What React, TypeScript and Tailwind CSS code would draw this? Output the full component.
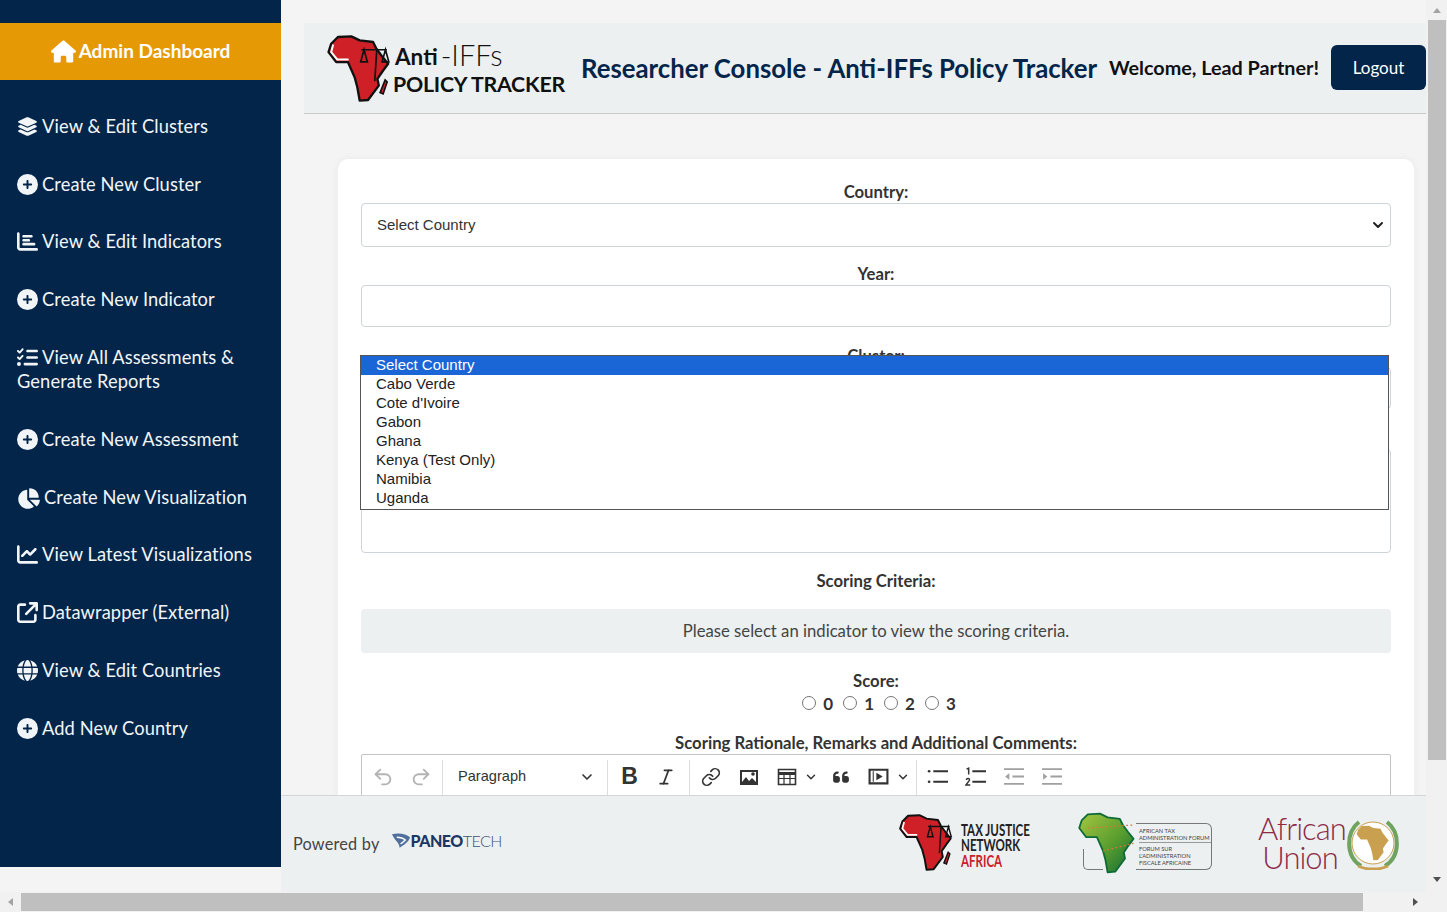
import { FaArrowUpRightFromSquare, FaChartBar, FaChartLine, FaChartPie, FaCirclePlus, FaGlobe, FaHouse, FaLayerGroup, FaListCheck, FaQuoteLeft } from 'react-icons/fa6';
import { ChevronDown, Italic, Link, Redo2, Undo2 } from 'lucide-react';
import type { ReactNode } from 'react';

const AFRICA =
  'M100 50 L140 48 L165 60 L205 65 L215 85 L232 108 L250 130 L235 150 L218 175 L222 195 L190 238 L165 240 L158 200 L150 170 L130 125 L95 125 L72 95 L80 70 Z';

function Africa({ className, justice }: { className: string; justice?: boolean }) {
  return (
    <svg viewBox="68 44 190 200" className={className}>
      <defs>
        <linearGradient id="ataf" x1="0" y1="0" x2="1" y2="1">
          <stop offset="0" stopColor="#a5c63f" />
          <stop offset="0.55" stopColor="#5a9e2f" />
          <stop offset="1" stopColor="#0d6b36" />
        </linearGradient>
      </defs>
      {justice ? (
        <>
          <path d={AFRICA} fill="#cf2027" stroke="#111" strokeWidth="7" strokeLinejoin="round" />
          <path d="M86 72 L80 95 L98 117 L132 117" fill="none" stroke="#fff" strokeWidth="6" />
          <path d="M241 178 L247 184 L235 220 L226 216 Z" fill="#cf2027" stroke="#111" strokeWidth="5" />
          <path d="M170 88 H246 M216 88 L210 182" stroke="#111" strokeWidth="5" fill="none" />
          <path d="M178 88 L168 124 H188 Z M242 88 L232 124 H252 Z" fill="none" stroke="#111" strokeWidth="5" />
        </>
      ) : (
        <>
          <path d={AFRICA} fill="url(#ataf)" stroke="#0d6b36" strokeWidth="6" strokeLinejoin="round" />
          <path d="M100 95 L250 85 M150 170 L250 145" fill="none" stroke="#d9763a" strokeWidth="4" strokeDasharray="6 8" />
        </>
      )}
    </svg>
  );
}

const menu: { icon: ReactNode; label: string; wide?: boolean }[] = [
  { icon: <FaLayerGroup />, label: 'View & Edit Clusters' },
  { icon: <FaCirclePlus />, label: 'Create New Cluster' },
  { icon: <FaChartBar />, label: 'View & Edit Indicators' },
  { icon: <FaCirclePlus />, label: 'Create New Indicator' },
  { icon: <FaListCheck />, label: 'View All Assessments & Generate Reports' },
  { icon: <FaCirclePlus />, label: 'Create New Assessment' },
  { icon: <FaChartPie />, label: 'Create New Visualization', wide: true },
  { icon: <FaChartLine />, label: 'View Latest Visualizations' },
  { icon: <FaArrowUpRightFromSquare />, label: 'Datawrapper (External)' },
  { icon: <FaGlobe />, label: 'View & Edit Countries' },
  { icon: <FaCirclePlus />, label: 'Add New Country' },
];

const countries = ['Cabo Verde', "Cote d'Ivoire", 'Gabon', 'Ghana', 'Kenya (Test Only)', 'Namibia', 'Uganda'];

function Sidebar() {
  return (
    <aside className="w-[281px] h-[867px] shrink-0 bg-[#04254a] text-[#f1f5f7] text-[18.3px] tracking-[0.1px] leading-[24px] pt-[23px]">
      <div className="h-[57px] pb-[1px] bg-[#e59a05] flex items-center justify-center gap-[3px] text-[19px] tracking-normal text-white font-bold">
        <FaHouse className="text-[25px]" />
        <span>Admin Dashboard</span>
      </div>
      <nav className="px-[17px]">
        {menu.map((m) => (
          <div key={m.label} className="mt-[33.8px]">
            <span className={`inline-block h-[20px] leading-none align-[-3px] mr-[4px] ${m.wide ? 'w-[23px] text-[23px]' : 'w-[21px] text-[21px]'} [&>svg]:block`}>
              {m.icon}
            </span>
            {m.label}
          </div>
        ))}
      </nav>
    </aside>
  );
}

function Header() {
  return (
    <header className="h-[91px] ml-[23px] bg-[#ecf0f1] border-b border-[#c9c9c9] flex items-center">
      <div className="w-[277px] pl-[23px] flex items-center shrink-0">
        <Africa justice className="w-[64px] h-[67px] mt-[1px] shrink-0" />
        <div className="ml-[2px] text-[#111] whitespace-nowrap">
          <div className="h-[31px] flex items-end pl-[2px]">
            <span className="font-bold text-[22.5px] leading-[28px]">Anti</span>
            <span className="ml-[3px] font-light text-[29px] leading-[33px]">-IFFs</span>
          </div>
          <div className="text-[21.3px] leading-[26px] font-bold tracking-[-0.2px]">POLICY TRACKER</div>
        </div>
      </div>
      <h1 className="text-[25.75px] font-bold text-[#04254a] whitespace-nowrap">Researcher Console - Anti-IFFs Policy Tracker</h1>
      <span className="ml-auto text-[19.8px] font-bold text-[#111] whitespace-nowrap">Welcome, Lead Partner!</span>
      <button className="ml-[12px] -mt-[1px] w-[95px] h-[45px] rounded-[6px] bg-[#04254a] text-white text-[17px]">Logout</button>
    </header>
  );
}

function Label({ children }: { children: ReactNode }) {
  return <div className="text-center text-[16.7px] leading-[20px] font-bold text-[#333]">{children}</div>;
}

function Toolbar() {
  return (
    <div className="mt-[1px] h-[46px] border border-[#c4c4c4] rounded-t-[2px] flex items-start pt-[5px] bg-white text-[#333] overflow-hidden">
      <div className="flex items-center gap-[16px] pl-[10px] pr-[10px] pb-[2px] h-[35px] border-r border-[#ddd]">
        <Undo2 className="w-[22px] h-[22px] text-[#b3b3b3]" />
        <Redo2 className="w-[22px] h-[22px] text-[#b3b3b3]" />
      </div>
      <div className="w-[165px] h-[35px] border-r border-[#ddd] pl-[15px] pr-[12px] pb-[2px] flex items-center justify-between text-[14.6px] font-['Liberation_Sans',sans-serif]">
        Paragraph
        <ChevronDown className="w-[16px] h-[16px]" strokeWidth={2.5} />
      </div>
      <div className="w-[82px] h-[35px] border-r border-[#ddd] pb-[2px] flex items-center justify-center gap-[18px]">
        <span className="text-[23px] leading-none font-black font-['Liberation_Sans',sans-serif]">B</span>
        <Italic className="w-[20px] h-[20px]" />
      </div>
      <div className="flex items-center pl-[11px] pb-[2px] h-[35px]">
        <Link className="w-[20px] h-[20px]" />
        <svg viewBox="0 0 20 20" className="w-[20px] h-[20px] ml-[18px]">
          <path d="M1 3h18v15H1z" fill="#333" />
          <path d="M3 5h14v10l-4-4-3 3-3-4-4 5z" fill="#fff" />
          <circle cx="14" cy="7" r="1.8" fill="#333" />
        </svg>
        <svg viewBox="0 0 20 20" className="w-[20px] h-[20px] ml-[18px]" fill="none" stroke="#333">
          <path d="M1.5 2.5h17v15h-17z" strokeWidth="1.6" />
          <path d="M1 6.5h18" strokeWidth="3" />
          <path d="M7 7v10M13 7v10M2 11.5h16" strokeWidth="1.2" />
        </svg>
        <ChevronDown className="w-[14px] h-[14px] ml-[7px]" strokeWidth={2.5} />
        <FaQuoteLeft className="w-[18px] h-[18px] ml-[14px]" />
        <svg viewBox="0 0 20 20" className="w-[21px] h-[21px] ml-[18px]" fill="none" stroke="#333">
          <path d="M1.5 3.5h17v13h-17z" strokeWidth="2" />
          <path d="M5 5v10" strokeWidth="1" />
          <path d="M8 6.5l6 3.5-6 3.5z" fill="#333" stroke="none" />
        </svg>
        <ChevronDown className="w-[14px] h-[14px] ml-[7px]" strokeWidth={2.5} />
      </div>
      <div className="ml-[6px] pl-[10px] pb-[2px] h-[35px] border-l border-[#ddd] flex items-center gap-[17px]">
        <svg viewBox="0 0 20 20" className="w-[21px] h-[21px]" fill="none" stroke="#333" strokeWidth="1.8">
          <path d="M6 5h14M6 15h14" />
          <circle cx="2" cy="5" r="1.3" fill="#333" stroke="none" />
          <circle cx="2" cy="15" r="1.3" fill="#333" stroke="none" />
        </svg>
        <svg viewBox="0 0 20 20" className="w-[21px] h-[21px]" fill="none" stroke="#333" strokeWidth="1.8">
          <path d="M7 5h13M7 15h13" />
          <path d="M1.5 3l2-1v6M1 13c2-2 4-1 3 1l-3 4h4" strokeWidth="1.4" />
        </svg>
        <svg viewBox="0 0 20 20" className="w-[21px] h-[21px]" fill="none" stroke="#a0a0a0" strokeWidth="1.8">
          <path d="M1 3h19M9 10h11M1 17h19" />
          <path d="M6 7l-4 3 4 3z" fill="#a0a0a0" stroke="none" />
        </svg>
        <svg viewBox="0 0 20 20" className="w-[21px] h-[21px]" fill="none" stroke="#a0a0a0" strokeWidth="1.8">
          <path d="M1 3h19M9 10h11M1 17h19" />
          <path d="M2 7l4 3-4 3z" fill="#a0a0a0" stroke="none" />
        </svg>
      </div>
    </div>
  );
}

function Form() {
  const field = 'w-full border border-[#ced4da] rounded-[4px] bg-white';
  return (
    <div className="relative mt-[45px] ml-[57px] w-[1076px] bg-white rounded-[10px] px-[23px] pt-[23px] shadow-[0_0_8px_rgba(0,0,0,0.05)]">
      <Label>Country:</Label>
      <div className={`${field} h-[44px] flex items-center justify-between pl-[15px] pr-[4px] text-[15px] text-[#333] mt-[1px] font-['Liberation_Sans',sans-serif]`}>
        Select Country
        <ChevronDown className="w-[16px] h-[16px] text-[#222]" strokeWidth={3} />
      </div>
      <div className="mt-[17px]"><Label>Year:</Label></div>
      <div className={`${field} h-[42px] mt-[1px]`} />
      <div className="mt-[19px]"><Label>Cluster:</Label></div>
      <div className={`${field} h-[42px] mt-[1px]`} />
      <div className="mt-[19px]"><Label>Indicator:</Label></div>
      <div className={`${field} h-[104px] mt-[1px]`} />
      <div className="mt-[18px]"><Label>Scoring Criteria:</Label></div>
      <div className="mt-[18px] h-[44px] pt-[1px] rounded-[4px] bg-[#ecf0f1] flex items-center justify-center text-[16.7px] text-[#444]">
        Please select an indicator to view the scoring criteria.
      </div>
      <div className="mt-[18px]"><Label>Score:</Label></div>
      <div className="mt-[2px] pl-[6px] h-[22px] flex items-center justify-center gap-[10px] text-[17px] font-bold text-[#333]">
        {[0, 1, 2, 3].map((n) => (
          <label key={n} className="flex items-center">
            <span className="w-[14px] h-[14px] rounded-full border border-[#767676] bg-white mr-[7px] -mt-[2px]" />
            {n}
          </label>
        ))}
      </div>
      <div className="mt-[18px]"><Label>Scoring Rationale, Remarks and Additional Comments:</Label></div>
      <Toolbar />
      <div className="h-[200px]" />
      <div className="absolute left-[22px] top-[196px] w-[1029px] h-[155px] bg-white border border-[#555] text-[15px] leading-[17px] text-[#222] font-['Liberation_Sans',sans-serif]">
        <div className="h-[19px] bg-[#1a66d6] text-white pl-[15px]">Select Country</div>
        {countries.map((c) => (
          <div key={c} className="h-[19px] pl-[15px]">{c}</div>
        ))}
      </div>
    </div>
  );
}

function AfricanUnion() {
  return (
    <div className="ml-[46px] mr-[26px] flex items-center">
      <div className="w-[84px] -mt-[3px] text-[31px] leading-[29px] font-light text-[#8e2a47] text-center tracking-[-1px]">
        <div>African</div>
        <div>Union</div>
      </div>
      <svg viewBox="0 0 54 52" className="ml-[4px] w-[54px] h-[52px]">
        <path d="M13 4C0 14 -1 38 15 48M41 4c13 10 14 34-2 44" fill="none" stroke="#6fa35f" strokeWidth="4" />
        <path d="M12 48c8 4 22 4 30 0" fill="none" stroke="#c9a050" strokeWidth="3" />
        <circle cx="27" cy="25" r="21" fill="#fff" stroke="#c9a050" strokeWidth="1" />
        <svg x="9" y="7" width="36" height="36" viewBox="68 44 190 200">
          <path d={AFRICA} fill="#c9a050" />
        </svg>
      </svg>
    </div>
  );
}

function Footer() {
  return (
    <footer className="h-[97px] shrink-0 bg-[#ecf0f1] border-t border-[#d5d5d5] flex items-center pl-[12px]">
      <span className="text-[16.3px] text-[#444] tracking-[0.2px] shrink-0 mt-[1px]">Powered by</span>
      <div className="ml-[12px] flex items-center -mt-[6px] shrink-0">
        <svg viewBox="0 0 20 16" className="w-[19px] h-[16px]">
          <path d="M0 1c6-2 15-1 19 3-2 6-7 8-11 11C8 10 3 8 0 1z" fill="#4f6f9c" />
          <path d="M5 4c4 0 7 1 9 3-2 2-3 3-5 4" fill="none" stroke="#fff" strokeWidth="1.5" />
        </svg>
        <span className="text-[16px] font-black text-[#1d3764] tracking-[-0.5px]">PANEO</span>
        <span className="text-[16px] font-light text-[#3c5478] tracking-[-0.5px]">TECH</span>
      </div>
      <div className="ml-auto flex items-center h-full">
        <div className="flex items-center">
          <Africa justice className="w-[54px] h-[57px] -mt-[4px] shrink-0" />
          <div className="ml-[8px] w-[70px] mt-[2px] text-[17.5px] leading-[15.5px] font-bold text-[#222] scale-x-[0.66] origin-left whitespace-nowrap">
            <div>TAX JUSTICE</div>
            <div>NETWORK</div>
            <div className="text-[#c8232c]">AFRICA</div>
          </div>
        </div>
        <div className="ml-[47px] w-[134px] h-[64px] -mt-[3px] relative flex items-center">
          <Africa className="w-[58px] h-[62px] shrink-0 relative z-10" />
          <div className="absolute left-[5px] top-[38px] w-[20px] h-[21px] border-l border-b border-[#777] rounded-bl-[5px]" />
          <div className="w-[76px] h-[47px] mt-[7px] border border-l-0 border-[#777] rounded-r-[6px] pl-[3px] pt-[3px] text-[5.7px] leading-[7px] text-[#444] whitespace-nowrap">
            <div className="border-b border-[#999] pb-[1px]">AFRICAN TAX<br />ADMINISTRATION FORUM</div>
            <div className="pt-[2px]">FORUM SUR<br />L'ADMINISTRATION<br />FISCALE AFRICAINE</div>
          </div>
        </div>
        <AfricanUnion />
      </div>
    </footer>
  );
}

function VScrollbar() {
  return (
    <div className="w-[21px] shrink-0 bg-[#f1f1f1] flex flex-col items-center pb-[3px]">
      <div className="h-[20px] flex items-center justify-center">
        <div className="w-0 h-0 border-x-[4px] border-x-transparent border-b-[5px] border-b-[#a3a3a3]" />
      </div>
      <div className="w-[18px] h-[740px] bg-[#bfbfbf]" />
      <div className="mt-auto h-[20px] flex items-center justify-center">
        <div className="w-0 h-0 border-x-[4px] border-x-transparent border-t-[5px] border-t-[#505050]" />
      </div>
    </div>
  );
}

function HScrollbar() {
  return (
    <div className="h-[20px] shrink-0 bg-[#f1f1f1] flex items-center">
      <div className="w-[21px] flex justify-center">
        <div className="w-0 h-0 border-y-[4px] border-y-transparent border-r-[5px] border-r-[#a3a3a3]" />
      </div>
      <div className="w-[1342px] h-[18px] bg-[#bfbfbf]" />
      <div className="ml-auto w-[84px] flex justify-end pr-[29px]">
        <div className="w-0 h-0 border-y-[4px] border-y-transparent border-l-[5px] border-l-[#505050]" />
      </div>
    </div>
  );
}

export default function App() {
  return (
    <div className="w-[1447px] h-[912px] overflow-hidden bg-[#f4f4f4] flex flex-col font-['Lato',sans-serif]">
      <div className="flex flex-1 min-h-0">
        <Sidebar />
        <main className="flex-1 min-w-0 flex flex-col">
          <div className="flex-1 min-h-0 overflow-hidden pt-[23px]">
            <Header />
            <Form />
          </div>
          <Footer />
        </main>
        <VScrollbar />
      </div>
      <HScrollbar />
    </div>
  );
}
